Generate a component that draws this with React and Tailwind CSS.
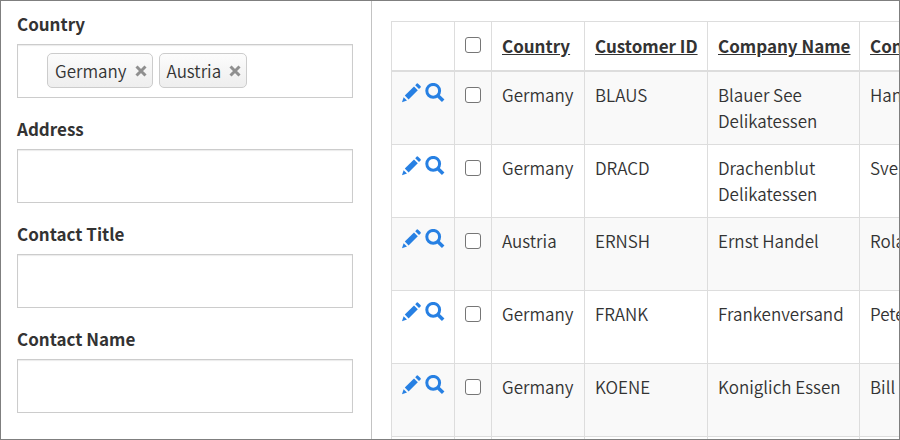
import { useState } from 'react'

const filters = ['Address', 'Contact Title', 'Contact Name']

const columns = ['Country', 'Customer ID', 'Company Name', 'Contact Name']

const customers = [
  { id: 'BLAUS', country: 'Germany', company: 'Blauer See Delikatessen', contact: 'Hanna Moos' },
  { id: 'DRACD', country: 'Germany', company: 'Drachenblut Delikatessen', contact: 'Sven Ottlieb' },
  { id: 'ERNSH', country: 'Austria', company: 'Ernst Handel', contact: 'Roland Mendel' },
  { id: 'FRANK', country: 'Germany', company: 'Frankenversand', contact: 'Peter Franken' },
  { id: 'KOENE', country: 'Germany', company: 'Koniglich Essen', contact: 'Bill' }
]

const PencilIcon = () => (
  <svg width="20" height="20" viewBox="0 0 20 20" fill="currentColor" aria-hidden="true">
    <path d="M0 19.2 1.6 14.2 5 17.6z" />
    <path d="M2.8 12.6 12 3.4 15.8 7.2 6.6 16.4z" />
    <path d="M13.2 2.2 14.8.6Q15.4 0 16.1.7L18.5 3.1Q19.2 3.8 18.6 4.4L17 6z" />
  </svg>
)

const SearchIcon = () => (
  <svg width="20" height="20" viewBox="0 0 20 20" fill="none" stroke="currentColor" aria-hidden="true">
    <circle cx="8.2" cy="7.8" r="6.4" strokeWidth="3" />
    <path d="M12.5 12.3 18.2 17.8" strokeWidth="3.6" />
  </svg>
)

const RemoveIcon = () => (
  <svg width="12" height="12" viewBox="0 0 12 12" stroke="currentColor" strokeWidth="3" aria-hidden="true">
    <path d="M1.5 1.5 10.5 10.5M10.5 1.5 1.5 10.5" />
  </svg>
)

const Checkbox = ({ label }) => (
  <input
    type="checkbox"
    aria-label={label}
    className="block w-4 h-4 appearance-none rounded-[3px] border border-[#767676] bg-white checked:bg-[#2780e3]"
  />
)

const App = () => {
  const [countries, setCountries] = useState(['Germany', 'Austria'])

  const removeCountry = (name) => {
    setCountries(countries.filter(country => country !== name))
  }

  return (
    <div className="flex h-screen overflow-hidden border border-[#7f7f7f] bg-white font-['Noto_Sans_CJK_SC',sans-serif] text-[17px] leading-[26px] font-[350] text-[#333333]">
      <aside className="w-[371px] shrink-0 border-r border-[#c3c3c3] pt-[10px] pl-4 pr-[18px]">
        <div className="mb-[18px]">
          <label htmlFor="country" className="mb-[7px] block font-bold">Country</label>
          <div className="flex h-[54px] items-center gap-[6px] border border-[#cccccc] pb-px pl-[29px] shadow-[inset_0_1px_1px_rgba(0,0,0,0.08)]">
            {countries.map(country => (
              <span
                key={country}
                className="flex h-[35px] items-center gap-2 rounded-[5px] border border-[#cccccc] bg-linear-to-b from-[#fcfcfc] to-[#eeeeee] pl-[7px] pr-[5px]"
              >
                {country}
                <button
                  type="button"
                  aria-label={`Remove ${country}`}
                  className="text-[#8f8f8f]"
                  onClick={() => removeCountry(country)}
                >
                  <RemoveIcon />
                </button>
              </span>
            ))}
            <input id="country" type="text" className="min-w-0 flex-1 outline-none" />
          </div>
        </div>
        {filters.map(name => (
          <div key={name} className="mb-[18px]">
            <label htmlFor={name} className="mb-[7px] block font-bold">{name}</label>
            <input
              id={name}
              type="text"
              className="block h-[54px] w-full border border-[#cccccc] px-4 shadow-[inset_0_1px_1px_rgba(0,0,0,0.08)]"
            />
          </div>
        ))}
      </aside>

      <main className="min-w-0 flex-1 overflow-hidden pl-[19px] pt-5">
        <table className="w-[620px] table-fixed border-collapse">
          <colgroup>
            <col className="w-[63px]" />
            <col className="w-[37px]" />
            <col className="w-[93px]" />
            <col className="w-[123px]" />
            <col className="w-[152px]" />
            <col />
          </colgroup>
          <thead>
            <tr className="h-[49px]">
              <th className="border border-b-2 border-[#dddddd]"></th>
              <th className="border border-b-2 border-[#dddddd] px-[10px] pb-[2px]">
                <Checkbox label="Select all" />
              </th>
              {columns.map(column => (
                <th key={column} className="border border-b-2 border-[#dddddd] px-[10px] text-left font-bold whitespace-nowrap">
                  <a href="#" className="underline">{column}</a>
                </th>
              ))}
            </tr>
          </thead>
          <tbody>
            {customers.map(customer => (
              <tr key={customer.id} className="h-[73px] align-top first:h-[74px] odd:bg-[#f9f9f9]">
                <td className="border border-[#dddddd] pt-[11px] pl-[10px]">
                  <div className="flex gap-[3px] text-[#2780e3]">
                    <button type="button" aria-label={`Edit ${customer.id}`}><PencilIcon /></button>
                    <button type="button" aria-label={`View ${customer.id}`}><SearchIcon /></button>
                  </div>
                </td>
                <td className="border border-[#dddddd] px-[10px] pt-[15px]">
                  <Checkbox label={`Select ${customer.id}`} />
                </td>
                <td className="border border-[#dddddd] px-[10px] pt-[10px]">{customer.country}</td>
                <td className="border border-[#dddddd] px-[10px] pt-[10px]">{customer.id}</td>
                <td className="border border-[#dddddd] px-[10px] pt-[10px]">{customer.company}</td>
                <td className="border border-[#dddddd] px-[10px] pt-[10px] whitespace-nowrap">{customer.contact}</td>
              </tr>
            ))}
          </tbody>
          <tfoot>
            <tr className="h-[50px]">
              <td className="border border-[#dddddd]"></td>
              <td className="border border-[#dddddd]"></td>
              <td className="border border-[#dddddd]"></td>
              <td className="border border-[#dddddd]"></td>
              <td className="border border-[#dddddd]"></td>
              <td className="border border-[#dddddd]"></td>
            </tr>
          </tfoot>
        </table>
      </main>
    </div>
  )
}

export default App
